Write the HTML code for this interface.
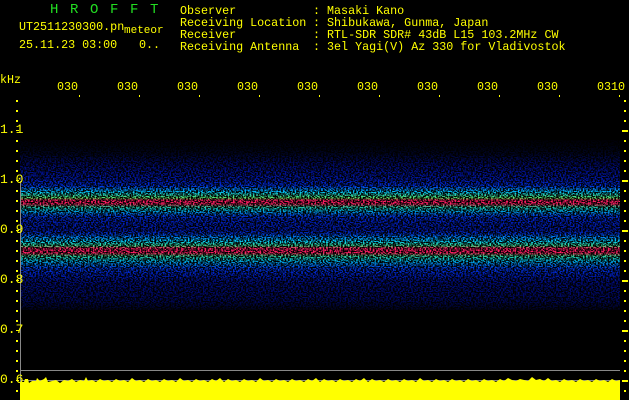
<!DOCTYPE html>
<html><head><meta charset="utf-8"><style>
html,body{margin:0;padding:0;background:#000;}
body{width:629px;height:400px;position:relative;overflow:hidden;font-family:"Liberation Mono",monospace;font-size:11.7px;color:#ffff00;}
.t{position:absolute;white-space:pre;line-height:12px;}
.g{color:#22dd22;font-size:14px;}
#spec{position:absolute;left:20px;top:140px;width:600px;height:170px;
background:
linear-gradient(to bottom,
 rgba(0,0,0,0) 0px,
 rgba(255,40,80,0) 58px, rgba(255,30,100,1) 60px, rgba(255,30,100,1) 64px, rgba(255,40,90,0) 67px,
 rgba(255,40,90,0) 106px, rgba(255,30,100,1) 108px, rgba(255,30,100,1) 113px, rgba(255,40,90,0) 116px),
linear-gradient(to bottom,
 rgba(0,0,0,0) 0px, rgba(0,0,0,0) 46px, rgba(0,230,255,.8) 52px, rgba(120,255,40,.95) 60px, rgba(0,230,200,.7) 70px, rgba(0,0,0,0) 76px,
 rgba(0,0,0,0) 94px, rgba(0,230,255,.8) 101px, rgba(120,255,40,.95) 110px, rgba(0,230,200,.7) 120px, rgba(0,0,0,0) 128px),
linear-gradient(to bottom,
 #000008 0px, #000420 12px, #000a70 25px, #0018b0 40px, #0040ff 50px, #0050ff 72px, #0020c0 80px, #0018a8 90px, #0050ff 98px, #0050ff 122px, #0020c0 134px, #000c80 142px, #000860 160px, #000220 170px);
}
#noise{position:absolute;left:20px;top:140px;width:600px;height:170px;mix-blend-mode:multiply;}
</style></head><body>
<div id="spec"></div>
<svg id="noise" width="600" height="170" shape-rendering="crispEdges"><filter id="f" x="0" y="0" width="100%" height="100%"><feTurbulence type="fractalNoise" baseFrequency="0.6 0.8" numOctaves="1" seed="3"/><feColorMatrix type="matrix" values="0 0 0 0 1  0 0 0 0 1  0 0 0 0 1  5 0 0 0 -2.1"/></filter><rect width="600" height="170" fill="#000"/><rect width="600" height="170" filter="url(#f)"/></svg>
<div style="position:absolute;left:20px;top:181px;width:1px;height:219px;background:#888"></div>
<div style="position:absolute;left:20px;top:370px;width:600px;height:1px;background:#888"></div>
<div style="position:absolute;left:20px;top:380px;width:600px;height:1px;background:#888"></div>
<svg style="position:absolute;left:20px;top:375px" width="600" height="25"><path fill="#ffff00" d="M0 25V7 L4 7 L5 4 L8 4 L9 8 L12 6 L16 6 L17 3 L20 6 L24 4 L26 2 L28 7 L32 6 L36 5 L40 8 L44 5 L48 6 L52 4 L56 7 L60 5 L64 6 L66 2 L68 6 L72 5 L76 7 L80 4 L84 6 L88 5 L92 7 L96 4 L100 6 L104 5 L108 7 L112 3 L116 6 L120 5 L124 7 L128 4 L132 6 L136 5 L140 7 L144 4 L148 6 L152 5 L156 7 L160 3 L164 6 L168 5 L172 7 L176 4 L180 6 L184 5 L188 7 L192 4 L196 6 L200 3 L204 7 L208 4 L212 6 L216 5 L220 7 L224 4 L228 6 L232 5 L236 7 L240 3 L244 6 L248 5 L252 7 L256 4 L260 6 L264 5 L268 7 L272 4 L276 6 L280 5 L284 7 L288 4 L292 6 L296 3 L300 7 L304 4 L308 6 L312 5 L316 7 L320 4 L324 6 L328 5 L332 7 L336 4 L340 6 L344 3 L348 7 L352 4 L356 6 L360 5 L364 7 L368 4 L372 6 L376 5 L380 7 L384 4 L388 6 L392 5 L396 7 L400 3 L404 6 L408 5 L412 7 L416 4 L420 6 L424 5 L428 7 L432 4 L436 6 L440 5 L444 7 L448 4 L452 6 L456 5 L460 7 L464 4 L468 6 L472 5 L476 7 L480 4 L484 6 L488 3 L492 5 L496 6 L500 4 L504 5 L508 6 L512 2 L516 5 L520 4 L524 6 L528 3 L532 6 L536 5 L540 7 L544 4 L548 6 L552 5 L556 7 L560 4 L564 6 L568 5 L572 7 L576 4 L580 6 L584 5 L588 7 L592 4 L596 6 L600 5 V25Z"/></svg>
<svg style="position:absolute;left:0;top:0" width="629" height="400">
<g fill="#ffff00">
<g id="lt">
<rect x="16" y="100" width="2" height="2"/><rect x="16" y="110" width="2" height="2"/><rect x="16" y="120" width="2" height="2"/><rect x="16" y="140" width="2" height="2"/><rect x="16" y="150" width="2" height="2"/><rect x="16" y="160" width="2" height="2"/><rect x="16" y="170" width="2" height="2"/><rect x="16" y="190" width="2" height="2"/><rect x="16" y="200" width="2" height="2"/><rect x="16" y="210" width="2" height="2"/><rect x="16" y="220" width="2" height="2"/><rect x="16" y="240" width="2" height="2"/><rect x="16" y="250" width="2" height="2"/><rect x="16" y="260" width="2" height="2"/><rect x="16" y="270" width="2" height="2"/><rect x="16" y="290" width="2" height="2"/><rect x="16" y="300" width="2" height="2"/><rect x="16" y="310" width="2" height="2"/><rect x="16" y="320" width="2" height="2"/><rect x="16" y="340" width="2" height="2"/><rect x="16" y="350" width="2" height="2"/><rect x="16" y="360" width="2" height="2"/><rect x="16" y="370" width="2" height="2"/><rect x="16" y="390" width="2" height="2"/>
<rect x="16" y="130" width="3" height="1"/><rect x="16" y="180" width="3" height="1"/><rect x="16" y="230" width="3" height="1"/><rect x="16" y="280" width="3" height="1"/><rect x="16" y="330" width="3" height="1"/><rect x="16" y="380" width="3" height="1"/>
</g>
<use href="#lt" x="608"/>
<rect x="622" y="130" width="6" height="2"/><rect x="622" y="180" width="6" height="2"/><rect x="622" y="230" width="6" height="2"/><rect x="622" y="280" width="6" height="2"/><rect x="622" y="330" width="6" height="2"/><rect x="622" y="380" width="6" height="2"/>
<rect x="79" y="95" width="1" height="2"/><rect x="139" y="95" width="1" height="2"/><rect x="199" y="95" width="1" height="2"/><rect x="259" y="95" width="1" height="2"/><rect x="319" y="95" width="1" height="2"/><rect x="379" y="95" width="1" height="2"/><rect x="439" y="95" width="1" height="2"/><rect x="499" y="95" width="1" height="2"/><rect x="559" y="95" width="1" height="2"/><rect x="619" y="95" width="1" height="2"/>
</g></svg>
<div class="t g" style="left:50px;top:4px;letter-spacing:11.6px">HROFFT</div>
<div class="t" style="left:19px;top:21px">UT2511230300.pn</div>
<div class="t" style="left:124px;top:25px;font-size:11px">meteor</div>
<div class="t" style="left:19px;top:39px">25.11.23 03:00</div>
<div class="t" style="left:139px;top:39px">0..</div>
<div class="t" style="left:180px;top:5px">Observer</div>
<div class="t" style="left:180px;top:17px">Receiving Location</div>
<div class="t" style="left:180px;top:29px">Receiver</div>
<div class="t" style="left:180px;top:41px">Receiving Antenna</div>
<div class="t" style="left:313px;top:5px">: Masaki Kano</div>
<div class="t" style="left:313px;top:17px">: Shibukawa, Gunma, Japan</div>
<div class="t" style="left:313px;top:29px">: RTL-SDR SDR# 43dB L15 103.2MHz CW</div>
<div class="t" style="left:313px;top:41px">: 3el Yagi(V) Az 330 for Vladivostok</div>
<div class="t" style="left:0px;top:74px">kHz</div>
<div class="t" style="left:57px;top:81px">030</div><div class="t" style="left:117px;top:81px">030</div><div class="t" style="left:177px;top:81px">030</div><div class="t" style="left:237px;top:81px">030</div><div class="t" style="left:297px;top:81px">030</div><div class="t" style="left:357px;top:81px">030</div><div class="t" style="left:417px;top:81px">030</div><div class="t" style="left:477px;top:81px">030</div><div class="t" style="left:537px;top:81px">030</div><div class="t" style="left:597px;top:81px">0310</div>
<div class="t" style="left:0;top:124px;font-size:13px">1.1</div>
<div class="t" style="left:0;top:174px;font-size:13px">1.0</div>
<div class="t" style="left:0;top:224px;font-size:13px">0.9</div>
<div class="t" style="left:0;top:274px;font-size:13px">0.8</div>
<div class="t" style="left:0;top:324px;font-size:13px">0.7</div>
<div class="t" style="left:0;top:374px;font-size:13px">0.6</div>
</body></html>
